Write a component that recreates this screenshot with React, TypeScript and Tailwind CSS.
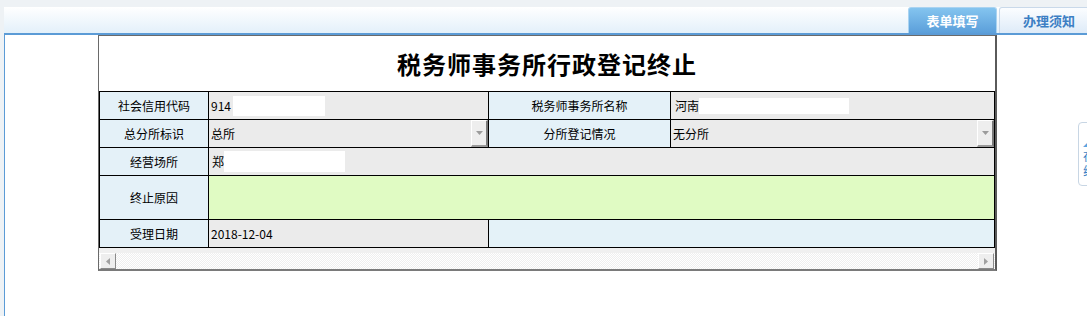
import React from 'react';

const font = "font-['Noto_Sans_CJK_SC','Noto_Sans',sans-serif]";

const Label: React.FC<{ text: string; className?: string }> = ({ text, className = '' }) => (
  <div className={`flex items-center justify-center bg-[#e4f1f8] border-r border-b border-black text-[12px] text-black ${className}`}>
    {text}
  </div>
);

const DropButton: React.FC = () => (
  <div className="ml-auto w-[17px] h-full flex items-center justify-center bg-[#eeeeee] border-t border-l border-t-white border-l-white border-r-2 border-b-2 border-r-[#7a7a7a] border-b-[#9a9a9a]">
    <svg width="7" height="4" viewBox="0 0 7 4">
      <path d="M0 0h7L3.5 4z" fill="#9c9c9c" />
    </svg>
  </div>
);

const ScrollArrow: React.FC<{ dir: 'left' | 'right' }> = ({ dir }) => (
  <div className="w-[16px] h-[16px] flex items-center justify-center bg-[#eeeeee] border-t border-l border-t-white border-l-white border-r border-b border-r-[#8a8a8a] border-b-[#8a8a8a]">
    <svg width="4" height="7" viewBox="0 0 4 7">
      {dir === 'left' ? <path d="M4 0v7L0 3.5z" fill="#a0a0a0" /> : <path d="M0 0v7l4-3.5z" fill="#a0a0a0" />}
    </svg>
  </div>
);

export default function App() {
  return (
    <div className={`relative w-[1087px] h-[316px] overflow-hidden bg-[#eef2f5] flex flex-col ${font}`}>
      {/* top strip */}
      <div className="h-[7px] shrink-0" />

      {/* tab bar */}
      <div className="ml-[4px] h-[28px] shrink-0 flex items-end pl-[904px] gap-[2px] bg-gradient-to-b from-white to-[#e3f0fa] border-b-2 border-[#5b9bd6]">
        <div className="w-[89px] h-[26px] shrink-0 flex items-center justify-center rounded-t-[3px] border border-b-0 border-[#a9d3f1] bg-gradient-to-b from-[#84c4ef] to-[#5b9fda] text-white text-[13px] font-bold">
          表单填写
        </div>
        <div className="w-[92px] h-[26px] shrink-0 flex items-center pl-[23px] rounded-t-[3px] border border-b-0 border-[#c9d9ea] bg-gradient-to-b from-[#fbfdff] to-[#deebf8] text-[#3c7fc4] text-[13px] font-bold">
          办理须知
        </div>
      </div>

      {/* content */}
      <div className="ml-[4px] flex-1 bg-white border-l border-[#5b9bd6]">
        <div className="ml-[93px] w-[899px] border-t border-l border-r-2 border-b-2 border-t-[#6a6a6a] border-l-[#6a6a6a] border-r-[#5a5a5a] border-b-[#7a7a7a] bg-white">
          {/* title */}
          <div className="h-[55px] flex items-center justify-center text-[24px] font-bold tracking-[1px] text-black">
            税务师事务所行政登记终止
          </div>

          {/* form grid */}
          <div className="grid grid-cols-[109px_280px_182px_324px] grid-rows-[28px_28px_28px_44px_28px] border-t border-l border-black text-[12px] text-black">
            {/* row 1 */}
            <Label text="社会信用代码" />
            <div className="flex items-center pl-[2px] bg-[#ebebeb] border-r border-b border-black">
              <span>914</span>
              <span className="ml-[2px] w-[92px] h-[20px] bg-white" />
            </div>
            <Label text="税务师事务所名称" />
            <div className="flex items-center pl-[4px] bg-[#ebebeb] border-r border-b border-black">
              <span>河南</span>
              <span className="w-[150px] h-[16px] bg-white" />
            </div>

            {/* row 2 */}
            <Label text="总分所标识" />
            <div className="flex items-center pl-[2px] bg-[#ebebeb] border-r border-b border-black">
              <span>总所</span>
              <DropButton />
            </div>
            <Label text="分所登记情况" />
            <div className="flex items-center pl-[2px] bg-[#ebebeb] border-r border-b border-black">
              <span>无分所</span>
              <DropButton />
            </div>

            {/* row 3 */}
            <Label text="经营场所" />
            <div className="col-span-3 flex items-center pl-[3px] bg-[#ebebeb] border-r border-b border-black">
              <span>郑</span>
              <span className="w-[121px] h-[21px] bg-white" />
            </div>

            {/* row 4 */}
            <Label text="终止原因" />
            <div className="col-span-3 bg-[#e0fbc3] border-r border-b border-black" />

            {/* row 5 */}
            <Label text="受理日期" />
            <div className="flex items-center pl-[2px] bg-[#ebebeb] border-r border-b border-black">
              2018-12-04
            </div>
            <div className="col-span-2 bg-[#e4f2f8] border-r border-b border-black" />
          </div>

          {/* horizontal scrollbar */}
          <div className="h-[5px] bg-[#f0f0f0]" />
          <div className="h-[16px] flex pl-[1px] pr-[1px] bg-[image:repeating-conic-gradient(#efefef_0_25%,#ffffff_0_50%)] bg-[length:2px_2px]">
            <ScrollArrow dir="left" />
            <div className="flex-1" />
            <ScrollArrow dir="right" />
          </div>
        </div>
      </div>

      {/* floating side tab */}
      <div className="absolute left-[1078px] top-[122px] w-[20px] h-[64px] rounded-[4px] border border-[#c8d6e4] bg-white flex flex-col items-start pl-[4px] pt-[10px] text-[12px] leading-[15px] text-[#3a7fc3]">
        <span className="text-[#5aa5e0]">◢</span>
        <span>在</span>
        <span>线</span>
      </div>
    </div>
  );
}
